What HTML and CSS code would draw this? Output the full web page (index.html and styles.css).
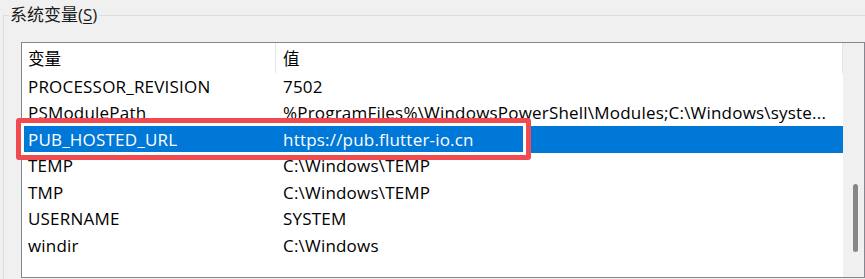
FILE: index.html
```html
<!DOCTYPE html>
<html lang="zh-CN">
<head>
    <meta charset="UTF-8">
    <title>系统变量</title>
    <link rel="stylesheet" href="styles.css">
</head>
<body>
    <fieldset class="group">
        <legend>系统变量(<u>S</u>)</legend>

        <div class="listbox">
            <div class="list">
                <div class="head">
                    <div class="cell name">变量</div>
                    <div class="cell value">值</div>
                </div>
                <div class="row">
                    <div class="cell name">PROCESSOR_REVISION</div>
                    <div class="cell value">7502</div>
                </div>
                <div class="row">
                    <div class="cell name">PSModulePath</div>
                    <div class="cell value">%ProgramFiles%\WindowsPowerShell\Modules;C:\Windows\syste...</div>
                </div>
                <div class="row selected">
                    <div class="cell name">PUB_HOSTED_URL</div>
                    <div class="cell value">https://pub.flutter-io.cn</div>
                </div>
                <div class="row">
                    <div class="cell name">TEMP</div>
                    <div class="cell value">C:\Windows\TEMP</div>
                </div>
                <div class="row">
                    <div class="cell name">TMP</div>
                    <div class="cell value">C:\Windows\TEMP</div>
                </div>
                <div class="row">
                    <div class="cell name">USERNAME</div>
                    <div class="cell value">SYSTEM</div>
                </div>
                <div class="row">
                    <div class="cell name">windir</div>
                    <div class="cell value">C:\Windows</div>
                </div>
            </div>
            <div class="scrollbar">
                <div class="thumb"></div>
            </div>

            <!-- annotation drawn over the selected row -->
            <div class="highlight"></div>
        </div>
    </fieldset>
</body>
</html>
```

FILE: styles.css
```css
* { box-sizing: border-box; }
html, body {
    height: 100%;
}
body {
    margin: 0;
    background-color: #f0f0f0;
    color: #000;
    font-family: 'Open Sans', 'Noto Sans CJK SC', sans-serif;
    font-size: 16px;
    overflow: hidden;
}
.group {
    margin: 0 0 0 3px;
    padding: 0;
    min-width: 0;
    height: 279px;
    border: 1px solid #dcdcdc;
    border-right: none;
    border-bottom: none;
}
.group legend {
    margin-left: 5px;
    padding: 0 2px 0 1px;
    line-height: 30px;
    font-size: 17px;
    color: #1a1a1a;
}
.group legend u {
    text-underline-offset: 2px;
}
.listbox {
    position: relative;
    display: flex;
    margin: 12px 0 0 17px;
    height: 236px;
    border: 1px solid #828790;
    background-color: #fff;
}
.list {
    width: 821px;
}
.head {
    display: flex;
    height: 30px;
    align-items: stretch;
}
.head .cell {
    display: flex;
    align-items: center;
    border-right: 1px solid #e5e5e5;
    font-size: 16.5px;
    letter-spacing: 0;
}
.row {
    display: flex;
    height: 26.5px;
    align-items: center;
    font-size: 17px;
    letter-spacing: 0.2px;
}
.cell {
    white-space: nowrap;
    overflow: hidden;
}
.cell.name {
    width: 254px;
    padding-left: 6px;
}
.cell.value {
    flex: 1;
    padding-left: 7px;
}
.row.selected {
    background-color: #0078d7;
    color: #fff;
}
.scrollbar {
    flex: 1;
    background-color: #f0f0f0;
    padding: 141px 0 0 10px;
}
.thumb {
    width: 5px;
    height: 68px;
    border-radius: 3px;
    background-color: #878787;
}
.highlight {
    position: absolute;
    left: -6px;
    top: 75px;
    width: 515px;
    height: 42px;
    border: 5px solid #ef4b51;
    border-radius: 3px;
    box-shadow: inset 0 0 0 3px #fff;
}
```
